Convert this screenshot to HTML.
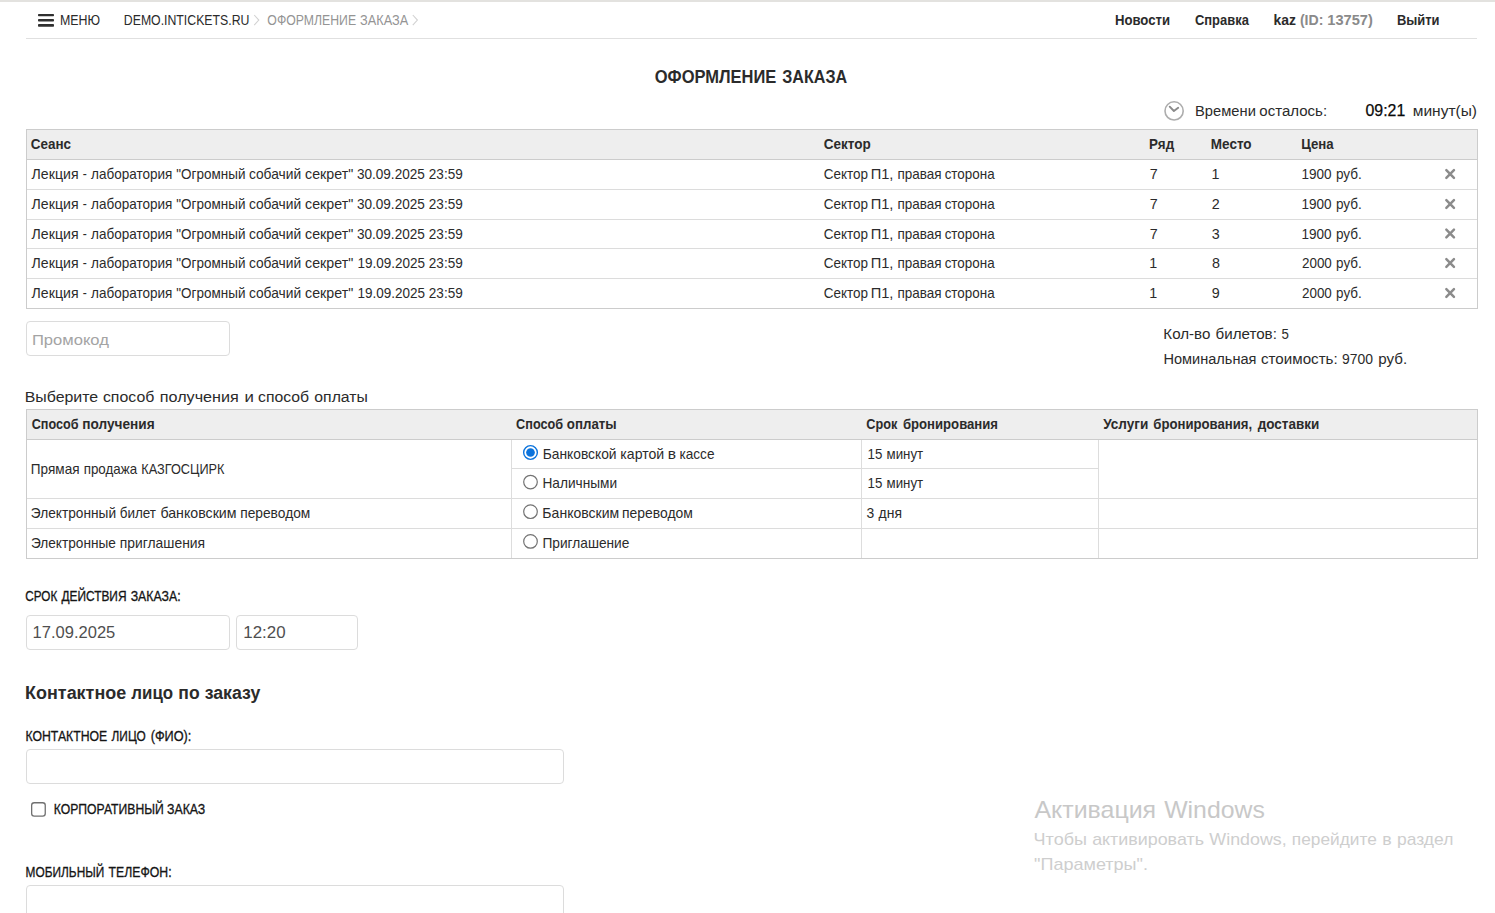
<!DOCTYPE html>
<html lang="ru"><head><meta charset="utf-8"><title>Оформление заказа</title>
<style>
html,body{margin:0;padding:0;background:#fff;}
body{width:1495px;height:913px;overflow:hidden;position:relative;font-family:"Liberation Sans",sans-serif;color:#2b2b2b;}
.t{position:absolute;left:0;white-space:pre;line-height:20px;height:20px;transform-origin:0 0;}
.b{position:absolute;box-sizing:border-box;}
.hl{position:absolute;height:1px;background:#ccc;}
.vl{position:absolute;width:1px;background:#ccc;}
.inp{position:absolute;box-sizing:border-box;border:1px solid #dcdcdc;border-radius:4px;background:#fff;}
svg{position:absolute;overflow:visible;}
</style></head><body>
<div class="b" style="left:0;top:0;width:1495px;height:2px;background:#e3e2df;"></div>
<div class="hl" style="left:26px;top:38px;width:1451px;background:#e0e0e0;"></div>
<!-- chevrons -->
<!-- clock -->
<!-- table 1 -->
<div class="b" style="left:26px;top:129px;width:1452px;height:31px;background:#eeeeee;"></div>
<div class="hl" style="left:26px;top:129px;width:1452px;"></div>
<div class="hl" style="left:26px;top:159px;width:1452px;"></div>
<div class="hl" style="left:26px;top:189px;width:1452px;background:#dcdcdc"></div>
<div class="hl" style="left:26px;top:219px;width:1452px;background:#dcdcdc"></div>
<div class="hl" style="left:26px;top:248px;width:1452px;background:#dcdcdc"></div>
<div class="hl" style="left:26px;top:278px;width:1452px;background:#dcdcdc"></div>
<div class="hl" style="left:26px;top:308px;width:1452px;"></div>
<div class="vl" style="left:26px;top:129px;height:180px;"></div>
<div class="vl" style="left:1477px;top:129px;height:180px;"></div>
<!-- X icons -->
<!-- promo input -->
<div class="inp" style="left:26px;top:321px;width:204px;height:35px;"></div>
<!-- table 2 -->
<div class="b" style="left:26px;top:409px;width:1452px;height:31px;background:#eeeeee;"></div>
<div class="hl" style="left:26px;top:409px;width:1452px;"></div>
<div class="hl" style="left:26px;top:439px;width:1452px;"></div>
<div class="hl" style="left:511px;top:468px;width:587px;background:#dcdcdc"></div>
<div class="hl" style="left:26px;top:498px;width:1452px;background:#dcdcdc"></div>
<div class="hl" style="left:26px;top:528px;width:1452px;background:#dcdcdc"></div>
<div class="hl" style="left:26px;top:558px;width:1452px;"></div>
<div class="vl" style="left:26px;top:409px;height:150px;"></div>
<div class="vl" style="left:1477px;top:409px;height:150px;"></div>
<div class="vl" style="left:511px;top:440px;height:118px;background:#dddddd"></div>
<div class="vl" style="left:861px;top:440px;height:118px;background:#dddddd"></div>
<div class="vl" style="left:1098px;top:440px;height:118px;background:#dddddd"></div>
<!-- radios -->
<!-- inputs -->
<div class="inp" style="left:26px;top:615px;width:204px;height:35px;"></div>
<div class="inp" style="left:236px;top:615px;width:122px;height:35px;"></div>
<div class="inp" style="left:26px;top:749px;width:538px;height:35px;"></div>
<div class="inp" style="left:26px;top:885px;width:538px;height:35px;"></div>
<svg style="left:0;top:0" width="1495" height="913" viewBox="0 0 1495 913">
<g fill="#303030"><rect x="38" y="14" width="16" height="2.3" rx="0.8"/><rect x="38" y="19" width="16" height="2.6" rx="0.8"/><rect x="38" y="24" width="16" height="2.8" rx="0.8"/></g>
<path d="M254.2 15 L258.8 20.1 L254.2 25.2" fill="none" stroke="#d2d2d2" stroke-width="1.1"/>
<path d="M412.8 15 L417.4 20.1 L412.8 25.2" fill="none" stroke="#d2d2d2" stroke-width="1.1"/>
<circle cx="1174.1" cy="110.9" r="9.1" fill="none" stroke="#adadad" stroke-width="1.6"/><path d="M1169.7 106.7 L1173.9 111 L1178.2 107.8" fill="none" stroke="#8a8a8a" stroke-width="1.9" stroke-linecap="round" stroke-linejoin="round"/>
<path d="M1446.35 170.2 L1453.95 177.8 M1453.95 170.2 L1446.35 177.8" stroke="#8b8b8b" stroke-width="2.5" stroke-linecap="round"/>
<path d="M1446.35 200.2 L1453.95 207.8 M1453.95 200.2 L1446.35 207.8" stroke="#8b8b8b" stroke-width="2.5" stroke-linecap="round"/>
<path d="M1446.35 229.7 L1453.95 237.3 M1453.95 229.7 L1446.35 237.3" stroke="#8b8b8b" stroke-width="2.5" stroke-linecap="round"/>
<path d="M1446.35 259.2 L1453.95 266.8 M1453.95 259.2 L1446.35 266.8" stroke="#8b8b8b" stroke-width="2.5" stroke-linecap="round"/>
<path d="M1446.35 289.2 L1453.95 296.8 M1453.95 289.2 L1446.35 296.8" stroke="#8b8b8b" stroke-width="2.5" stroke-linecap="round"/>
<circle cx="530.5" cy="452.5" r="6.85" fill="#fff" stroke="#0b73dc" stroke-width="1.4"/><circle cx="530.5" cy="452.5" r="4.35" fill="#0b73dc"/>
<circle cx="530.5" cy="482.1" r="6.8" fill="#fff" stroke="#737373" stroke-width="1.2"/>
<circle cx="530.5" cy="511.7" r="6.8" fill="#fff" stroke="#737373" stroke-width="1.2"/>
<circle cx="530.5" cy="541.4" r="6.8" fill="#fff" stroke="#737373" stroke-width="1.2"/>
<rect x="31.65" y="802.75" width="13.6" height="13.3" rx="2.6" fill="#fff" stroke="#707070" stroke-width="1.3"/>
</svg>
<span class="t" id="h1" style="top:11.00px;font-size:13.8px;transform:translateX(60.00px) scaleX(0.8980);">МЕНЮ</span>
<span class="t" id="h2" style="top:11.00px;font-size:13.8px;transform:translateX(123.82px) scaleX(0.8902);">DEMO.INTICKETS.RU</span>
<span class="t" id="h3_0" style="top:11.00px;font-size:13.8px;color:#949494;transform:translateX(267.37px) scaleX(0.8890);">ОФОРМЛЕНИЕ</span>
<span class="t" id="h3_1" style="top:11.00px;font-size:13.8px;color:#949494;transform:translateX(360.09px) scaleX(0.9239);">ЗАКАЗА</span>
<span class="t" id="h4" style="top:11.00px;font-size:13.8px;font-weight:700;transform:translateX(1114.89px) scaleX(0.9525);">Новости</span>
<span class="t" id="h5" style="top:11.00px;font-size:13.8px;font-weight:700;transform:translateX(1194.96px) scaleX(0.9379);">Справка</span>
<span class="t" id="h6" style="top:11.00px;font-size:13.8px;font-weight:700;transform:translateX(1273.62px) scaleX(1.0071);">kaz</span>
<span class="t" id="h7_0" style="top:11.00px;font-size:13.8px;font-weight:700;color:#8a8a8a;transform:translateX(1299.92px) scaleX(1.0209);">(ID:</span>
<span class="t" id="h7_1" style="top:11.00px;font-size:13.8px;font-weight:700;color:#8a8a8a;transform:translateX(1327.32px) scaleX(1.0574);">13757)</span>
<span class="t" id="h8" style="top:11.00px;font-size:13.8px;font-weight:700;transform:translateX(1396.89px) scaleX(0.9372);">Выйти</span>
<span class="t" id="ti_0" style="top:67.01px;font-size:17.6px;font-weight:700;transform:translateX(654.77px) scaleX(0.9373);">ОФОРМЛЕНИЕ</span>
<span class="t" id="ti_1" style="top:67.01px;font-size:17.6px;font-weight:700;transform:translateX(782.25px) scaleX(0.9148);">ЗАКАЗА</span>
<span class="t" id="tm1_0" style="top:101.01px;font-size:15.2px;transform:translateX(1195.07px) scaleX(0.9679);">Времени</span>
<span class="t" id="tm1_1" style="top:101.01px;font-size:15.2px;transform:translateX(1259.35px) scaleX(0.9892);">осталось:</span>
<span class="t" id="tm2" style="top:100.00px;font-size:16.5px;color:#0a0a0a;transform:translateX(1365.48px) scaleX(0.9633);-webkit-text-stroke:0.25px #0a0a0a;">09:21</span>
<span class="t" id="tm3" style="top:101.01px;font-size:15.2px;transform:translateX(1412.73px) scaleX(1.0218);">минут(ы)</span>
<span class="t" id="a1" style="top:134.00px;font-size:14.3px;font-weight:700;transform:translateX(30.83px) scaleX(0.9402);">Сеанс</span>
<span class="t" id="a2" style="top:134.00px;font-size:14.3px;font-weight:700;transform:translateX(823.79px) scaleX(0.9445);">Сектор</span>
<span class="t" id="a3" style="top:134.00px;font-size:14.3px;font-weight:700;transform:translateX(1149.08px) scaleX(0.9355);">Ряд</span>
<span class="t" id="a4" style="top:134.00px;font-size:14.3px;font-weight:700;transform:translateX(1210.79px) scaleX(0.9455);">Место</span>
<span class="t" id="a5" style="top:134.00px;font-size:14.3px;font-weight:700;transform:translateX(1301.20px) scaleX(0.9237);">Цена</span>
<span class="t" id="r0a0" style="top:164.00px;font-size:14.3px;transform:translateX(31.58px) scaleX(0.9883);">Лекция</span>
<span class="t" id="r0a1" style="top:164.00px;font-size:14.3px;transform:translateX(82.86px) scaleX(0.8513);">-</span>
<span class="t" id="r0a2" style="top:164.00px;font-size:14.3px;transform:translateX(91.04px) scaleX(0.9456);">лаборатория</span>
<span class="t" id="r0a3" style="top:164.00px;font-size:14.3px;transform:translateX(176.31px) scaleX(0.9427);">&quot;Огромный</span>
<span class="t" id="r0a4" style="top:164.00px;font-size:14.3px;transform:translateX(248.90px) scaleX(0.9638);">собачий</span>
<span class="t" id="r0a5" style="top:164.00px;font-size:14.3px;transform:translateX(305.08px) scaleX(0.9948);">секрет&quot;</span>
<span class="t" id="r0a6" style="top:164.00px;font-size:14.3px;transform:translateX(356.91px) scaleX(0.9492);">30.09.2025</span>
<span class="t" id="r0a7" style="top:164.00px;font-size:14.3px;transform:translateX(428.81px) scaleX(0.9486);">23:59</span>
<span class="t" id="r0b0" style="top:164.00px;font-size:14.3px;transform:translateX(823.82px) scaleX(0.9428);">Сектор</span>
<span class="t" id="r0b1" style="top:164.00px;font-size:14.3px;transform:translateX(870.69px) scaleX(1.0242);">П1,</span>
<span class="t" id="r0b2" style="top:164.00px;font-size:14.3px;transform:translateX(897.44px) scaleX(0.9437);">правая</span>
<span class="t" id="r0b3" style="top:164.00px;font-size:14.3px;transform:translateX(944.64px) scaleX(0.9388);">сторона</span>
<span class="t" id="r0c" style="top:164.00px;font-size:14.3px;transform:translateX(1149.75px) scaleX(1.0000);">7</span>
<span class="t" id="r0d" style="top:164.00px;font-size:14.3px;transform:translateX(1211.52px) scaleX(1.0000);">1</span>
<span class="t" id="r0e" style="top:164.00px;font-size:14.3px;transform:translateX(1301.44px) scaleX(0.9476);word-spacing:0.57px;">1900 руб.</span>
<span class="t" id="r1a0" style="top:194.00px;font-size:14.3px;transform:translateX(31.58px) scaleX(0.9883);">Лекция</span>
<span class="t" id="r1a1" style="top:194.00px;font-size:14.3px;transform:translateX(82.86px) scaleX(0.8513);">-</span>
<span class="t" id="r1a2" style="top:194.00px;font-size:14.3px;transform:translateX(91.04px) scaleX(0.9456);">лаборатория</span>
<span class="t" id="r1a3" style="top:194.00px;font-size:14.3px;transform:translateX(176.31px) scaleX(0.9427);">&quot;Огромный</span>
<span class="t" id="r1a4" style="top:194.00px;font-size:14.3px;transform:translateX(248.90px) scaleX(0.9638);">собачий</span>
<span class="t" id="r1a5" style="top:194.00px;font-size:14.3px;transform:translateX(305.08px) scaleX(0.9948);">секрет&quot;</span>
<span class="t" id="r1a6" style="top:194.00px;font-size:14.3px;transform:translateX(356.91px) scaleX(0.9492);">30.09.2025</span>
<span class="t" id="r1a7" style="top:194.00px;font-size:14.3px;transform:translateX(428.81px) scaleX(0.9486);">23:59</span>
<span class="t" id="r1b0" style="top:194.00px;font-size:14.3px;transform:translateX(823.82px) scaleX(0.9428);">Сектор</span>
<span class="t" id="r1b1" style="top:194.00px;font-size:14.3px;transform:translateX(870.69px) scaleX(1.0242);">П1,</span>
<span class="t" id="r1b2" style="top:194.00px;font-size:14.3px;transform:translateX(897.44px) scaleX(0.9437);">правая</span>
<span class="t" id="r1b3" style="top:194.00px;font-size:14.3px;transform:translateX(944.64px) scaleX(0.9388);">сторона</span>
<span class="t" id="r1c" style="top:194.00px;font-size:14.3px;transform:translateX(1149.75px) scaleX(1.0000);">7</span>
<span class="t" id="r1d" style="top:194.00px;font-size:14.3px;transform:translateX(1211.75px) scaleX(1.0000);">2</span>
<span class="t" id="r1e" style="top:194.00px;font-size:14.3px;transform:translateX(1301.44px) scaleX(0.9476);word-spacing:0.57px;">1900 руб.</span>
<span class="t" id="r2a0" style="top:224.00px;font-size:14.3px;transform:translateX(31.58px) scaleX(0.9883);">Лекция</span>
<span class="t" id="r2a1" style="top:224.00px;font-size:14.3px;transform:translateX(82.86px) scaleX(0.8513);">-</span>
<span class="t" id="r2a2" style="top:224.00px;font-size:14.3px;transform:translateX(91.04px) scaleX(0.9456);">лаборатория</span>
<span class="t" id="r2a3" style="top:224.00px;font-size:14.3px;transform:translateX(176.31px) scaleX(0.9427);">&quot;Огромный</span>
<span class="t" id="r2a4" style="top:224.00px;font-size:14.3px;transform:translateX(248.90px) scaleX(0.9638);">собачий</span>
<span class="t" id="r2a5" style="top:224.00px;font-size:14.3px;transform:translateX(305.08px) scaleX(0.9948);">секрет&quot;</span>
<span class="t" id="r2a6" style="top:224.00px;font-size:14.3px;transform:translateX(356.91px) scaleX(0.9492);">30.09.2025</span>
<span class="t" id="r2a7" style="top:224.00px;font-size:14.3px;transform:translateX(428.81px) scaleX(0.9486);">23:59</span>
<span class="t" id="r2b0" style="top:224.00px;font-size:14.3px;transform:translateX(823.82px) scaleX(0.9428);">Сектор</span>
<span class="t" id="r2b1" style="top:224.00px;font-size:14.3px;transform:translateX(870.69px) scaleX(1.0242);">П1,</span>
<span class="t" id="r2b2" style="top:224.00px;font-size:14.3px;transform:translateX(897.44px) scaleX(0.9437);">правая</span>
<span class="t" id="r2b3" style="top:224.00px;font-size:14.3px;transform:translateX(944.64px) scaleX(0.9388);">сторона</span>
<span class="t" id="r2c" style="top:224.00px;font-size:14.3px;transform:translateX(1149.75px) scaleX(1.0000);">7</span>
<span class="t" id="r2d" style="top:224.00px;font-size:14.3px;transform:translateX(1211.67px) scaleX(1.0000);">3</span>
<span class="t" id="r2e" style="top:224.00px;font-size:14.3px;transform:translateX(1301.44px) scaleX(0.9476);word-spacing:0.57px;">1900 руб.</span>
<span class="t" id="r3a0" style="top:253.00px;font-size:14.3px;transform:translateX(31.58px) scaleX(0.9883);">Лекция</span>
<span class="t" id="r3a1" style="top:253.00px;font-size:14.3px;transform:translateX(82.86px) scaleX(0.8513);">-</span>
<span class="t" id="r3a2" style="top:253.00px;font-size:14.3px;transform:translateX(91.04px) scaleX(0.9456);">лаборатория</span>
<span class="t" id="r3a3" style="top:253.00px;font-size:14.3px;transform:translateX(176.31px) scaleX(0.9427);">&quot;Огромный</span>
<span class="t" id="r3a4" style="top:253.00px;font-size:14.3px;transform:translateX(248.90px) scaleX(0.9638);">собачий</span>
<span class="t" id="r3a5" style="top:253.00px;font-size:14.3px;transform:translateX(305.08px) scaleX(0.9948);">секрет&quot;</span>
<span class="t" id="r3a6" style="top:253.00px;font-size:14.3px;transform:translateX(357.43px) scaleX(0.9429);">19.09.2025</span>
<span class="t" id="r3a7" style="top:253.00px;font-size:14.3px;transform:translateX(428.81px) scaleX(0.9486);">23:59</span>
<span class="t" id="r3b0" style="top:253.00px;font-size:14.3px;transform:translateX(823.82px) scaleX(0.9428);">Сектор</span>
<span class="t" id="r3b1" style="top:253.00px;font-size:14.3px;transform:translateX(870.69px) scaleX(1.0242);">П1,</span>
<span class="t" id="r3b2" style="top:253.00px;font-size:14.3px;transform:translateX(897.44px) scaleX(0.9437);">правая</span>
<span class="t" id="r3b3" style="top:253.00px;font-size:14.3px;transform:translateX(944.64px) scaleX(0.9388);">сторона</span>
<span class="t" id="r3c" style="top:253.00px;font-size:14.3px;transform:translateX(1149.13px) scaleX(1.0000);">1</span>
<span class="t" id="r3d" style="top:253.00px;font-size:14.3px;transform:translateX(1212.00px) scaleX(1.0000);">8</span>
<span class="t" id="r3e" style="top:253.00px;font-size:14.3px;transform:translateX(1301.98px) scaleX(0.9382);word-spacing:0.57px;">2000 руб.</span>
<span class="t" id="r4a0" style="top:283.00px;font-size:14.3px;transform:translateX(31.58px) scaleX(0.9883);">Лекция</span>
<span class="t" id="r4a1" style="top:283.00px;font-size:14.3px;transform:translateX(82.86px) scaleX(0.8513);">-</span>
<span class="t" id="r4a2" style="top:283.00px;font-size:14.3px;transform:translateX(91.04px) scaleX(0.9456);">лаборатория</span>
<span class="t" id="r4a3" style="top:283.00px;font-size:14.3px;transform:translateX(176.31px) scaleX(0.9427);">&quot;Огромный</span>
<span class="t" id="r4a4" style="top:283.00px;font-size:14.3px;transform:translateX(248.90px) scaleX(0.9638);">собачий</span>
<span class="t" id="r4a5" style="top:283.00px;font-size:14.3px;transform:translateX(305.08px) scaleX(0.9948);">секрет&quot;</span>
<span class="t" id="r4a6" style="top:283.00px;font-size:14.3px;transform:translateX(357.43px) scaleX(0.9429);">19.09.2025</span>
<span class="t" id="r4a7" style="top:283.00px;font-size:14.3px;transform:translateX(428.81px) scaleX(0.9486);">23:59</span>
<span class="t" id="r4b0" style="top:283.00px;font-size:14.3px;transform:translateX(823.82px) scaleX(0.9428);">Сектор</span>
<span class="t" id="r4b1" style="top:283.00px;font-size:14.3px;transform:translateX(870.69px) scaleX(1.0242);">П1,</span>
<span class="t" id="r4b2" style="top:283.00px;font-size:14.3px;transform:translateX(897.44px) scaleX(0.9437);">правая</span>
<span class="t" id="r4b3" style="top:283.00px;font-size:14.3px;transform:translateX(944.64px) scaleX(0.9388);">сторона</span>
<span class="t" id="r4c" style="top:283.00px;font-size:14.3px;transform:translateX(1149.13px) scaleX(1.0000);">1</span>
<span class="t" id="r4d" style="top:283.00px;font-size:14.3px;transform:translateX(1211.71px) scaleX(1.0000);">9</span>
<span class="t" id="r4e" style="top:283.00px;font-size:14.3px;transform:translateX(1301.98px) scaleX(0.9382);word-spacing:0.57px;">2000 руб.</span>
<span class="t" id="to1_0" style="top:324.01px;font-size:15.2px;transform:translateX(1163.34px) scaleX(0.9953);">Кол-во</span>
<span class="t" id="to1_1" style="top:324.01px;font-size:15.2px;transform:translateX(1215.52px) scaleX(0.9972);">билетов:</span>
<span class="t" id="to1_2" style="top:324.01px;font-size:15.2px;transform:translateX(1281.52px) scaleX(0.8708);">5</span>
<span class="t" id="to2_0" style="top:349.01px;font-size:15.2px;transform:translateX(1163.40px) scaleX(0.9591);">Номинальная</span>
<span class="t" id="to2_1" style="top:349.01px;font-size:15.2px;transform:translateX(1261.03px) scaleX(0.9972);">стоимость:</span>
<span class="t" id="to2_2" style="top:349.01px;font-size:15.2px;transform:translateX(1342.04px) scaleX(0.9159);">9700</span>
<span class="t" id="to2_3" style="top:349.01px;font-size:15.2px;transform:translateX(1378.23px) scaleX(0.9968);">руб.</span>
<span class="t" id="pr" style="top:330.01px;font-size:15.4px;color:#a4a4a4;transform:translateX(31.88px) scaleX(1.0784);">Промокод</span>
<span class="t" id="ch_0" style="top:387.01px;font-size:15.2px;transform:translateX(24.63px) scaleX(1.0487);">Выберите</span>
<span class="t" id="ch_1" style="top:387.01px;font-size:15.2px;transform:translateX(102.92px) scaleX(1.0451);">способ</span>
<span class="t" id="ch_2" style="top:387.01px;font-size:15.2px;transform:translateX(159.78px) scaleX(1.0644);">получения</span>
<span class="t" id="ch_3" style="top:387.01px;font-size:15.2px;transform:translateX(244.46px) scaleX(1.1038);">и</span>
<span class="t" id="ch_4" style="top:387.01px;font-size:15.2px;transform:translateX(258.05px) scaleX(1.0388);">способ</span>
<span class="t" id="ch_5" style="top:387.01px;font-size:15.2px;transform:translateX(314.32px) scaleX(1.0386);">оплаты</span>
<span class="t" id="b1_0" style="top:414.00px;font-size:14.3px;font-weight:700;transform:translateX(31.67px) scaleX(0.8819);">Способ</span>
<span class="t" id="b1_1" style="top:414.00px;font-size:14.3px;font-weight:700;transform:translateX(82.36px) scaleX(0.9528);">получения</span>
<span class="t" id="b2_0" style="top:414.00px;font-size:14.3px;font-weight:700;transform:translateX(516.11px) scaleX(0.8846);">Способ</span>
<span class="t" id="b2_1" style="top:414.00px;font-size:14.3px;font-weight:700;transform:translateX(566.87px) scaleX(0.9283);">оплаты</span>
<span class="t" id="b3_0" style="top:414.00px;font-size:14.3px;font-weight:700;transform:translateX(866.27px) scaleX(0.8864);">Срок</span>
<span class="t" id="b3_1" style="top:414.00px;font-size:14.3px;font-weight:700;transform:translateX(902.90px) scaleX(0.9189);">бронирования</span>
<span class="t" id="b4_0" style="top:414.00px;font-size:14.3px;font-weight:700;transform:translateX(1103.22px) scaleX(0.9491);">Услуги</span>
<span class="t" id="b4_1" style="top:414.00px;font-size:14.3px;font-weight:700;transform:translateX(1153.30px) scaleX(0.9198);">бронирования,</span>
<span class="t" id="b4_2" style="top:414.00px;font-size:14.3px;font-weight:700;transform:translateX(1257.63px) scaleX(0.9442);">доставки</span>
<span class="t" id="c1_0" style="top:459.00px;font-size:14.3px;transform:translateX(30.85px) scaleX(0.9482);">Прямая</span>
<span class="t" id="c1_1" style="top:459.00px;font-size:14.3px;transform:translateX(83.68px) scaleX(0.9344);">продажа</span>
<span class="t" id="c1_2" style="top:459.00px;font-size:14.3px;transform:translateX(141.34px) scaleX(0.8892);">КАЗГОСЦИРК</span>
<span class="t" id="c2_0" style="top:503.00px;font-size:14.3px;transform:translateX(30.87px) scaleX(0.9567);">Электронный</span>
<span class="t" id="c2_1" style="top:503.00px;font-size:14.3px;transform:translateX(119.71px) scaleX(0.9426);">билет</span>
<span class="t" id="c2_2" style="top:503.00px;font-size:14.3px;transform:translateX(160.42px) scaleX(0.9917);">банковским</span>
<span class="t" id="c2_3" style="top:503.00px;font-size:14.3px;transform:translateX(240.20px) scaleX(0.9629);">переводом</span>
<span class="t" id="c3_0" style="top:533.00px;font-size:14.3px;transform:translateX(30.91px) scaleX(0.9548);">Электронные</span>
<span class="t" id="c3_1" style="top:533.00px;font-size:14.3px;transform:translateX(119.75px) scaleX(0.9704);">приглашения</span>
<span class="t" id="d1_0" style="top:444.00px;font-size:14.3px;transform:translateX(542.66px) scaleX(0.9656);">Банковской</span>
<span class="t" id="d1_1" style="top:444.00px;font-size:14.3px;transform:translateX(620.32px) scaleX(0.9861);">картой</span>
<span class="t" id="d1_2" style="top:444.00px;font-size:14.3px;transform:translateX(667.81px) scaleX(1.0875);">в</span>
<span class="t" id="d1_3" style="top:444.00px;font-size:14.3px;transform:translateX(679.48px) scaleX(0.9527);">кассе</span>
<span class="t" id="d2" style="top:473.00px;font-size:14.3px;transform:translateX(542.42px) scaleX(0.9564);">Наличными</span>
<span class="t" id="d3_0" style="top:503.00px;font-size:14.3px;transform:translateX(542.37px) scaleX(0.9820);">Банковским</span>
<span class="t" id="d3_1" style="top:503.00px;font-size:14.3px;transform:translateX(621.96px) scaleX(0.9749);">переводом</span>
<span class="t" id="d4" style="top:533.00px;font-size:14.3px;transform:translateX(542.46px) scaleX(0.9586);">Приглашение</span>
<span class="t" id="e1" style="top:444.00px;font-size:14.3px;transform:translateX(867.54px) scaleX(0.9283);word-spacing:0.57px;">15 минут</span>
<span class="t" id="e2" style="top:473.00px;font-size:14.3px;transform:translateX(867.54px) scaleX(0.9283);word-spacing:0.57px;">15 минут</span>
<span class="t" id="e3" style="top:503.00px;font-size:14.3px;transform:translateX(866.46px) scaleX(0.9728);word-spacing:0.57px;">3 дня</span>
<span class="t" id="l1_0" style="top:587.00px;font-size:13.8px;color:#151515;transform:translateX(25.31px) scaleX(0.8485);-webkit-text-stroke:0.3px #151515;">СРОК</span>
<span class="t" id="l1_1" style="top:587.00px;font-size:13.8px;color:#151515;transform:translateX(61.38px) scaleX(0.8625);-webkit-text-stroke:0.3px #151515;">ДЕЙСТВИЯ</span>
<span class="t" id="l1_2" style="top:587.00px;font-size:13.8px;color:#151515;transform:translateX(130.70px) scaleX(0.8905);-webkit-text-stroke:0.3px #151515;">ЗАКАЗА:</span>
<span class="t" id="i1" style="top:622.01px;font-size:16.3px;color:#4f4f4f;transform:translateX(32.61px) scaleX(1.0144);">17.09.2025</span>
<span class="t" id="i2" style="top:622.01px;font-size:16.3px;color:#4f4f4f;transform:translateX(243.26px) scaleX(1.0374);">12:20</span>
<span class="t" id="hd_0" style="top:683.01px;font-size:17.6px;font-weight:700;transform:translateX(25.08px) scaleX(1.0202);">Контактное</span>
<span class="t" id="hd_1" style="top:683.01px;font-size:17.6px;font-weight:700;transform:translateX(131.31px) scaleX(0.9595);">лицо</span>
<span class="t" id="hd_2" style="top:683.01px;font-size:17.6px;font-weight:700;transform:translateX(178.31px) scaleX(0.9959);">по</span>
<span class="t" id="hd_3" style="top:683.01px;font-size:17.6px;font-weight:700;transform:translateX(204.65px) scaleX(1.0070);">заказу</span>
<span class="t" id="l2_0" style="top:727.00px;font-size:13.8px;color:#151515;transform:translateX(25.44px) scaleX(0.8880);-webkit-text-stroke:0.3px #151515;">КОНТАКТНОЕ</span>
<span class="t" id="l2_1" style="top:727.00px;font-size:13.8px;color:#151515;transform:translateX(111.59px) scaleX(0.8591);-webkit-text-stroke:0.3px #151515;">ЛИЦО</span>
<span class="t" id="l2_2" style="top:727.00px;font-size:13.8px;color:#151515;transform:translateX(150.67px) scaleX(0.9214);-webkit-text-stroke:0.3px #151515;">(ФИО):</span>
<span class="t" id="l3_0" style="top:800.00px;font-size:13.8px;color:#151515;transform:translateX(53.79px) scaleX(0.8832);-webkit-text-stroke:0.3px #151515;">КОРПОРАТИВНЫЙ</span>
<span class="t" id="l3_1" style="top:800.00px;font-size:13.8px;color:#151515;transform:translateX(166.98px) scaleX(0.8922);-webkit-text-stroke:0.3px #151515;">ЗАКАЗ</span>
<span class="t" id="l4_0" style="top:863.00px;font-size:13.8px;color:#151515;transform:translateX(25.62px) scaleX(0.8607);-webkit-text-stroke:0.3px #151515;">МОБИЛЬНЫЙ</span>
<span class="t" id="l4_1" style="top:863.00px;font-size:13.8px;color:#151515;transform:translateX(108.57px) scaleX(0.8890);-webkit-text-stroke:0.3px #151515;">ТЕЛЕФОН:</span>
<span class="t" id="w1_0" style="top:800.01px;font-size:24px;color:#c8c8c8;transform:translateX(1034.42px) scaleX(1.0388);">Активация</span>
<span class="t" id="w1_1" style="top:800.01px;font-size:24px;color:#c8c8c8;transform:translateX(1164.18px) scaleX(1.0334);">Windows</span>
<span class="t" id="w2_0" style="top:830.00px;font-size:17px;color:#cecece;transform:translateX(1033.58px) scaleX(1.0605);">Чтобы</span>
<span class="t" id="w2_1" style="top:830.00px;font-size:17px;color:#cecece;transform:translateX(1092.13px) scaleX(1.0514);">активировать</span>
<span class="t" id="w2_2" style="top:830.00px;font-size:17px;color:#cecece;transform:translateX(1209.36px) scaleX(1.0502);">Windows,</span>
<span class="t" id="w2_3" style="top:830.00px;font-size:17px;color:#cecece;transform:translateX(1291.82px) scaleX(1.0168);">перейдите</span>
<span class="t" id="w2_4" style="top:830.00px;font-size:17px;color:#cecece;transform:translateX(1382.29px) scaleX(1.0481);">в</span>
<span class="t" id="w2_5" style="top:830.00px;font-size:17px;color:#cecece;transform:translateX(1397.05px) scaleX(1.0256);">раздел</span>
<span class="t" id="w3" style="top:855.00px;font-size:17px;color:#cecece;transform:translateX(1034.11px) scaleX(1.0596);">&quot;Параметры&quot;.</span>
</body></html>
